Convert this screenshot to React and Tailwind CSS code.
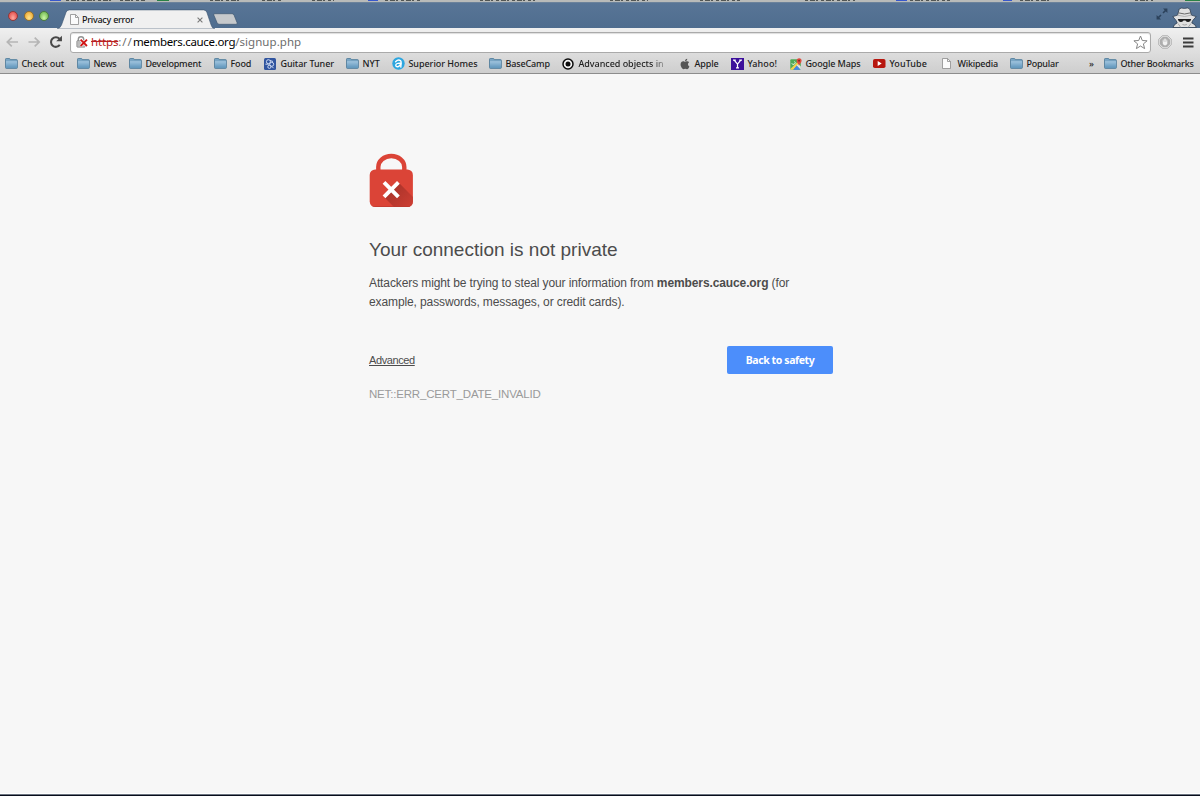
import { FaApple } from 'react-icons/fa';

const bookmarks = [
  { label: 'Check out', icon: 'folder', box: 'w-[72px]', text: 'tracking-[0px]' },
  { label: 'News', icon: 'folder', box: 'w-[52px]', text: 'tracking-[-0.1px]' },
  { label: 'Development', icon: 'folder', box: 'w-[85px]', text: 'tracking-[-0.18px]' },
  { label: 'Food', icon: 'folder', box: 'w-[50px]', text: 'tracking-[-0.12px]' },
  { label: 'Guitar Tuner', icon: 'guitar', box: 'w-[82px]', text: 'tracking-[-0.05px]' },
  { label: 'NYT', icon: 'folder', box: 'w-[46px]', text: 'tracking-[0.1px]' },
  { label: 'Superior Homes', icon: 'homes', box: 'w-[97px]', text: 'tracking-[-0.03px]' },
  { label: 'BaseCamp', icon: 'folder', box: 'w-[73px]', text: 'tracking-[-0.13px]' },
  { label: 'Advanced objects in', icon: 'record', box: 'w-[116px]', text: 'tracking-[-0.03px]', fade: true },
  { label: 'Apple', icon: 'apple', box: 'w-[53px]', text: 'tracking-[-0.1px]' },
  { label: 'Yahoo!', icon: 'yahoo', box: 'w-[58px]', text: 'tracking-[0.1px]' },
  { label: 'Google Maps', icon: 'maps', box: 'w-[84px]', text: 'tracking-[-0.12px]' },
  { label: 'YouTube', icon: 'youtube', box: 'w-[68px]', text: 'tracking-[0.1px]' },
  { label: 'Wikipedia', icon: 'page', box: 'w-[69px]', text: 'tracking-[-0.2px]' },
  { label: 'Popular', icon: 'folder', box: 'w-[79px]', text: 'tracking-[-0.2px]' },
];

function PageIcon({ className }) {
  return (
    <svg className={className} viewBox="0 0 9 11" fill="none">
      <path d="M.5.5h5l3 3v7h-8z" fill="#fbfbfb" stroke="#8c8c8c" strokeWidth=".8" />
      <path d="M5.5.5v3h3" stroke="#8c8c8c" strokeWidth=".8" />
    </svg>
  );
}

function BookmarkIcon({ name }) {
  switch (name) {
    case 'folder':
      return (
        <svg className="h-[11px] w-[13px]" viewBox="0 0 13 11">
          <defs>
            <linearGradient id="folder" x1="0" y1="0" x2="0" y2="1">
              <stop offset="0" stopColor="#a0c4de" />
              <stop offset="1" stopColor="#6096bc" />
            </linearGradient>
          </defs>
          <path d="M.5 9.5V1.2q0-.7.7-.7h3.2q.5 0 .7.6l.2.5h6.2q.9 0 .9.9v7q0 .9-.9.9H1.3q-.8 0-.8-.9z" fill="#79a5c4" stroke="#4d7897" strokeWidth=".8" />
          <path d="M1 3.2h11v6.6H1z" fill="url(#folder)" />
        </svg>
      );
    case 'guitar':
      return (
        <svg className="mr-px size-3 shrink-0" viewBox="0 0 12 12">
          <rect width="12" height="12" rx="1.5" fill="#31559f" />
          <g fill="none" stroke="#d9e4f8" strokeWidth=".9">
            <circle cx="4.4" cy="3.7" r="2" />
            <circle cx="7.7" cy="6.3" r="2" />
            <circle cx="5.4" cy="8.8" r="1.6" />
            <path d="M1.4 6.2h3.4M6 2.5l3 1M8 8.5l1.5 1.7" />
          </g>
        </svg>
      );
    case 'homes':
      return (
        <svg className="size-[13px]" viewBox="0 0 13 13">
          <circle cx="6.5" cy="6.5" r="6.2" fill="#2da6df" />
          <g fill="none" stroke="#fff" strokeWidth="1.4" strokeLinecap="round">
            <path d="M3.6 4.7q2.8-2.9 5-.9.7.7.5 2.5l-.3 3.8" />
            <path d="M8.8 6.1Q4 5.9 3.8 8.2 3.8 10 6 9.7 8.3 9.2 8.8 6.5" />
          </g>
        </svg>
      );
    case 'record':
      return (
        <svg className="mr-px size-3 shrink-0" viewBox="0 0 12 12">
          <circle cx="6" cy="6" r="5" fill="#f4f4f4" stroke="#0b0b0b" strokeWidth="1.5" />
          <circle cx="6" cy="6" r="2.5" fill="#0b0b0b" />
        </svg>
      );
    case 'apple':
      return <FaApple className="size-3 text-[#555]" />;
    case 'yahoo':
      return (
        <svg className="h-3 w-[13px] shrink-0" viewBox="0 0 13 12">
          <rect width="13" height="12" fill="#3c0f9b" />
          <path d="M3.2 2.2l3.3 4v3.6M9.8 2.2l-3.3 4M2 2.2h2.8M8.2 2.2H11M5 9.8h3" fill="none" stroke="#fff" strokeWidth="1.2" />
        </svg>
      );
    case 'maps':
      return (
        <svg className="size-3" viewBox="0 0 12 12">
          <rect x=".3" y="1.3" width="10.5" height="10.5" rx="1" fill="#4faa55" />
          <path d="M.3 11L9 2.4l1.8 1.8-7.6 7.6H1z" fill="#f5d34e" />
          <path d="M3.2 11.8L6.8 7.6l4 4.2z" fill="#4685e8" />
          <path d="M6.8 7.6l1.6-1.5 2.4 2.4v3.3z" fill="#e6e6e6" />
          <path d="M1.8 5.2a1.7 1.7 0 1 0 2.7-1.8" fill="none" stroke="#fff" strokeWidth=".8" />
          <path d="M9 8C9 5.8 6.6 5 6.6 2.7a2.5 2.5 0 0 1 5 0C11.6 5 9 5.8 9 8z" fill="#dd4b3e" />
          <circle cx="9.1" cy="2.7" r=".9" fill="#7d231c" />
        </svg>
      );
    case 'youtube':
      return (
        <svg className="h-[9px] w-[13px]" viewBox="0 0 13 9">
          <rect width="12.5" height="9" rx="1.8" fill="#b7170f" />
          <path d="M4.7 2.1v4.8l4-2.4z" fill="#fff" />
        </svg>
      );
    default:
      return <PageIcon className="mr-[2px] h-[11px] w-[9px] shrink-0" />;
  }
}

function Bookmark({ label, icon, box, text, fade }) {
  return (
    <div className={`flex shrink-0 items-center ${box}`}>
      <span className="mr-[3.4px] flex w-[13px] shrink-0 justify-center">
        <BookmarkIcon name={icon} />
      </span>
      <span className={`whitespace-nowrap ${text} ${fade ? 'bg-linear-to-r from-[#1c1c1c] from-85% to-[#1c1c1c]/30 bg-clip-text text-transparent' : ''}`}>
        {label}
      </span>
    </div>
  );
}

// Sliver of the window that sits behind the browser
function BackWindow() {
  return (
    <svg className="block h-[2px] w-full bg-[#b9bbb9]" viewBox="0 0 1200 2" preserveAspectRatio="none">
      <path d="M66 .5h46M120 .5h25M210 .5h32M262 .5h20M312 .5h22M385 .5h36M480 .5h55M610 .5h38M700 .5h40M805 .5h50M910 .5h40M1020 .5h32M1135 .5h18" stroke="#525654" strokeDasharray="3 2 5 1 2 3" />
      <path d="M50 .5h11M368 .5h10M896 .5h11M1003 .5h9" stroke="#3858cc" />
      <path d="M157 .5h12M1185 .5h15" stroke="#298245" />
    </svg>
  );
}

function TrafficLights() {
  return (
    <div className="flex gap-[5.5px] pt-2 pl-2">
      <span className="size-[10px] rounded-full border border-[#8f3a3a] bg-radial-[at_50%_75%] from-[#ffaaa0] to-[#dc3837]" />
      <span className="size-[10px] rounded-full border border-[#93702f] bg-radial-[at_50%_75%] from-[#ffe58b] to-[#e99d25]" />
      <span className="size-[10px] rounded-full border border-[#4c7c3d] bg-radial-[at_50%_75%] from-[#cdf8a6] to-[#5dab40]" />
    </div>
  );
}

function Incognito() {
  return (
    <svg className="h-[21px] w-[25px]" viewBox="0 0 25 21">
      <path d="M1 20.5q1-3.4 4.2-4.6L4 13.4.8 9.6l4.8-1.5L7.2 2Q9 .4 12.4 1.4 16.2.2 17.8 2l1.6 6.1 4.8 1.5-3.4 3.8-1 2.5q3.6 1.2 4.6 4.6z" fill="#e0e0e0" stroke="#2d3d50" strokeWidth=".8" />
      <path d="M6.2 5.8q6.4 2.4 12.6 0" fill="none" stroke="#6a6a6a" strokeWidth="1" />
      <path d="M5.6 8.2q7 2.6 13.6 0" fill="none" stroke="#a5a5a5" strokeWidth=".8" />
      <path d="M5.8 12h13.4l-.8 2q-2.8 2.2-5-.6h-1.8q-2.5 2.8-5 .5z" fill="#1c1c1c" />
      <path d="M6 16.5l2.8 4M19 16.5l-3 4M10.5 17.5q2.2 1 4.4 0" fill="none" stroke="#959595" strokeWidth=".8" />
    </svg>
  );
}

function TabStrip() {
  return (
    <div className="flex h-[26px] justify-between border-t border-[#6b829b] bg-linear-to-b from-[#587596] to-[#4f6d8f]">
      <div className="flex">
        <TrafficLights />
        <div className="relative ml-[8px] flex h-[25px] w-[160px] items-end">
          <svg className="absolute inset-0 h-[26px] w-[160px]" viewBox="0 0 160 26">
            <path d="M0 26q3-.5 4.5-4L9 9.4q.8-2.5 3.2-2.5h134.5q2.4 0 3.2 2.5l4.2 12.6q1 3.5 3.9 4z" fill="#f0f0f0" stroke="#3e5670" strokeWidth=".6" />
          </svg>
          <div className="relative flex h-[17px] w-full items-center pl-[13px] text-[9px] font-medium text-[#151515]">
            <PageIcon className="mr-[3px] h-[11px] w-[9px]" />
            <span className="tracking-[-0.25px]">Privacy error</span>
            <svg className="absolute right-[14px] size-[6px]" viewBox="0 0 6 6">
              <path d="M.6.6l4.8 4.8M5.4.6L.6 5.4" stroke="#777" strokeWidth="1.1" />
            </svg>
          </div>
        </div>
        <svg className="mt-[10px] -ml-[4px] h-3 w-[25px]" viewBox="0 0 25 12">
          <path d="M1.5.7h17.6q1.4 0 2 1.5l3 7.5q.5 1.6-1 1.6H6.3q-1.6 0-2.2-1.5L.9 2.3Q.4.7 1.5.7z" fill="#c6c9cc" stroke="#415973" strokeWidth=".7" />
        </svg>
      </div>
      <div className="flex items-end">
        <svg className="mr-[4px] mb-[8px] size-3" viewBox="0 0 12 12">
          <path d="M7 5l3.4-3.4M5 7l-3.4 3.4" stroke="#2c425b" strokeWidth="1.5" />
          <path d="M7 .6h4.4V5zM.6 7v4.4H5z" fill="#2c425b" />
        </svg>
        <Incognito />
        <span className="w-[3px]" />
      </div>
    </div>
  );
}

function Toolbar() {
  return (
    <div className="flex h-7 items-center">
      <svg className="ml-[6px] h-3 w-[35px]" viewBox="0 0 35 12" fill="none" stroke="#b5b5b5" strokeWidth="1.7">
        <path d="M12 6H1.5M5.8 1.6L1.3 6l4.5 4.4M22.5 6H33M28.7 1.6L33.2 6l-4.5 4.4" />
      </svg>
      <svg className="ml-2 size-[14px]" viewBox="0 0 13 13">
        <path d="M10 9.2a4.5 4.5 0 1 1-.3-5.7" fill="none" stroke="#484848" strokeWidth="1.9" />
        <path d="M12 .6v5.3H6.7z" fill="#484848" />
      </svg>
      <div className="ml-[7px] flex h-[21px] w-[1081px] items-center rounded-[3px] border border-[#aaa] bg-white pl-[5px] shadow-[inset_0_1px_1px_#ddd]">
        <svg className="h-3 w-[13px]" viewBox="0 0 13 12">
          <path d="M2.3 5V3.5a2.7 2.7 0 0 1 5.4 0V5" fill="none" stroke="#929292" strokeWidth="1.4" />
          <rect x=".8" y="4.6" width="8.5" height="6.6" rx=".8" fill="#bcbcbc" stroke="#858585" strokeWidth=".7" />
          <path d="M4.6 3.6l6.4 6.4M11 3.6L4.6 10" stroke="#fff" strokeWidth="3" />
          <path d="M4.6 3.6l6.4 6.4M11 3.6L4.6 10" stroke="#d01313" strokeWidth="1.8" />
        </svg>
        <div className="ml-[2px] text-[11.5px] whitespace-nowrap text-[#6d6d6d]">
          <span className="tracking-[-0.15px] text-[#b92121] line-through">https</span>
          <span className="tracking-[1px]">://</span>
          <span className="tracking-[-0.32px] text-black">members.cauce.org</span>
          <span className="tracking-[0.05px]">/signup.php</span>
        </div>
        <svg className="mr-[2px] ml-auto size-[15px]" viewBox="0 0 15 15">
          <path d="M7.5 1l1.8 4.5 4.8.3-3.7 3.1 1.2 4.7-4.1-2.6-4.1 2.6 1.2-4.7L.9 5.8l4.8-.3z" fill="#fff" stroke="#858585" strokeWidth="1" strokeLinejoin="round" />
        </svg>
      </div>
      <svg className="ml-[7px] size-[14px]" viewBox="0 0 14 14">
        <path d="M4.3.7h5.4l3.6 3.6v5.4l-3.6 3.6H4.3L.7 9.7V4.3z" fill="#e0e0e0" stroke="#a8a8a8" strokeWidth=".8" />
        <path d="M4.8 2h4.4L12 4.8v4.4L9.2 12H4.8L2 9.2V4.8z" fill="#adadad" />
        <path d="M5.2 7V4.6M6.4 6.5V3.6M7.6 6.5V3.6M8.8 7V4.6" stroke="#f1f1f1" strokeWidth=".8" />
        <path d="M4.8 6.4h4.5v2.2Q9 10.4 7.1 10.4q-1.7 0-2.3-2z" fill="#f1f1f1" />
      </svg>
      <svg className="ml-[11px] h-[11px] w-[11px]" viewBox="0 0 11 11">
        <path d="M0 1.5h10.5M0 5.5h10.5M0 9.5h10.5" stroke="#3c3c3c" strokeWidth="2" />
      </svg>
    </div>
  );
}

function BookmarksBar() {
  return (
    <div className="flex h-[17px] pb-[2px] pl-[5px] text-[9px] leading-[15px] font-medium text-[#1c1c1c]">
      {bookmarks.map((item) => (
        <Bookmark key={item.label} {...item} />
      ))}
      <span className="w-[15px] shrink-0">»</span>
      <Bookmark label="Other Bookmarks" icon="folder" box="w-[94px]" text="tracking-[-0.2px]" />
    </div>
  );
}

function WarningLock() {
  return (
    <svg className="h-[54px] w-[44px]" viewBox="0 0 44 54">
      <defs>
        <linearGradient id="lock-shadow" x1="20" y1="36" x2="38" y2="54" gradientUnits="userSpaceOnUse">
          <stop offset="0" stopColor="#a9332a" />
          <stop offset="1" stopColor="#c93d32" />
        </linearGradient>
        <clipPath id="lock-body">
          <rect x=".7" y="16.5" width="43.2" height="37.5" rx="5.5" />
        </clipPath>
      </defs>
      <path d="M9.3 18.5V14a13 11 0 0 1 26 0v4.5" fill="none" stroke="#db4437" strokeWidth="4.4" />
      <rect x=".7" y="16.5" width="43.2" height="37.5" rx="5.5" fill="#db4437" />
      <g clipPath="url(#lock-body)">
        <path d="M29.6 29.5L46 45.9V54H25L14.8 43.8z" fill="url(#lock-shadow)" />
        <path d="M0 53.7h44" stroke="#b9382d" strokeWidth=".7" />
      </g>
      <path d="M15 29.4l14.4 14.4M29.4 29.4L15 43.8" stroke="#fff" strokeWidth="3.9" />
    </svg>
  );
}

export default function App() {
  return (
    <div className="flex h-[796px] w-[1200px] flex-col overflow-hidden bg-[#f7f7f7] font-['Noto_Sans','Lucida_Grande',sans-serif]">
      <BackWindow />
      <TabStrip />
      <div className="h-[46px] border-b border-[#8c8c8c] bg-linear-to-b from-[#f0f0f0] to-[#cecece]">
        <Toolbar />
        <BookmarksBar />
      </div>

      <main className="ml-[369px] w-[464px] flex-1 pt-[79px] font-['Liberation_Sans',Arial,sans-serif] text-[#4c4c4c]">
        <WarningLock />
        <h1 className="mt-[31px] text-[19px] leading-6 whitespace-nowrap">Your connection is not private</h1>
        <p className="mt-[12px] text-[12px] leading-[19px] tracking-[-0.11px]">
          Attackers might be trying to steal your information from <strong>members.cauce.org</strong> (for
          <br />
          example, passwords, messages, or credit cards).
        </p>
        <div className="mt-[34px] flex h-7 items-center justify-between">
          <a className="text-[11px] tracking-[-0.4px] underline" href="#">Advanced</a>
          <button className="h-7 w-[106px] rounded-[2px] bg-[#4c8efb] pt-px font-['Noto_Sans',sans-serif] text-[10.5px] font-bold tracking-[-0.4px] text-white">
            Back to safety
          </button>
        </div>
        <p className="mt-[12px] text-[11.5px] leading-4 tracking-[-0.18px] text-[#9a9a9a]">NET::ERR_CERT_DATE_INVALID</p>
      </main>

      <div className="h-[3px] border-t border-b border-t-white border-b-[#080d1c] bg-[#6c7480]" />
    </div>
  );
}
